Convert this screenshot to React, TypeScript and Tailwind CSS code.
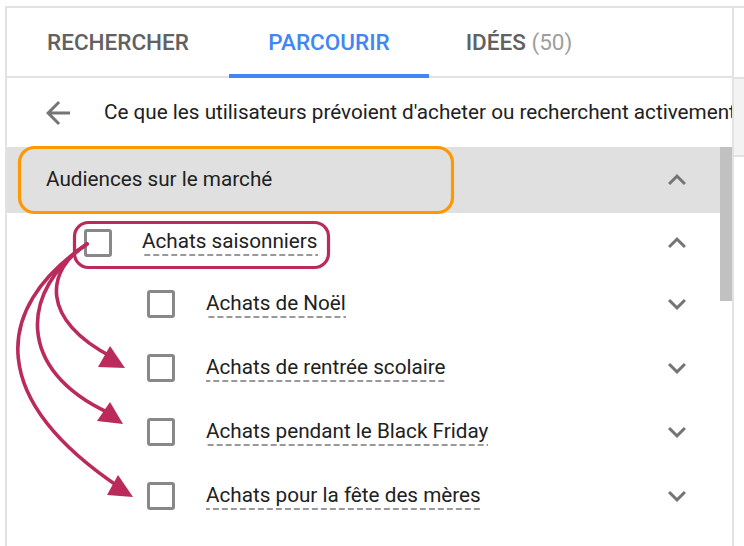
function Chevron({ up }: { up?: boolean }) {
  return (
    <svg viewBox="0 0 24 24" className="h-[36px] w-[36px] shrink-0 fill-[#757575]">
      {up ? (
        <path d="M12 8l-6 6 1.41 1.41L12 10.83l4.59 4.58L18 14z" />
      ) : (
        <path d="M16.59 8.59L12 13.17 7.41 8.59 6 10l6 6 6-6z" />
      )}
    </svg>
  );
}

function Checkbox() {
  return <span className="h-[28px] w-[28px] shrink-0 rounded-[3px] border-[3px] border-[#888888]" />;
}

function Label({ text }: { text: string }) {
  return (
    <span className="inline-block bg-[linear-gradient(to_right,#999999_62%,transparent_62%)] bg-[length:9px_2px] bg-bottom bg-repeat-x pb-[3px] text-[20.7px] leading-[24px] text-[#212121]">
      {text}
    </span>
  );
}

const items = [
  'Achats de Noël',
  'Achats de rentrée scolaire',
  'Achats pendant le Black Friday',
  'Achats pour la fête des mères',
];

export default function App() {
  return (
    <div className="relative h-[546px] w-[744px] overflow-hidden bg-white font-['Roboto',sans-serif]">
      <div className="flex h-full pl-[5px] pt-[6px]">
        <div className="flex w-[729px] flex-col border-x-2 border-t-2 border-[#e2e2e2]">
          {/* tabs */}
          <div className="flex h-[70px] border-b-2 border-[#e2e2e2] pt-[2px] text-[22.5px] font-medium">
            <div className="flex w-[222px] items-center justify-center text-[#616161]">RECHERCHER</div>
            <div className="relative flex w-[200px] items-center justify-center text-[#4285f4]">
              PARCOURIR
              <span className="absolute inset-x-0 bottom-[-2px] h-[4px] bg-[#4285f4]" />
            </div>
            <div className="flex w-[180px] items-center justify-center text-[#616161]">
              IDÉES&nbsp;<span className="font-normal text-[#9e9e9e]">(50)</span>
            </div>
          </div>

          {/* breadcrumb */}
          <div className="flex h-[69px] items-center gap-[28px] overflow-hidden whitespace-nowrap pl-[33px]">
            <svg viewBox="0 0 24 24" className="h-[36px] w-[36px] shrink-0 fill-[#757575]">
              <path d="M20 11H7.83l5.59-5.59L12 4l-8 8 8 8 1.41-1.41L7.83 13H20v-2z" />
            </svg>
            <span className="text-[20.7px] text-[#212121]">
              Ce que les utilisateurs prévoient d'acheter ou recherchent activement
            </span>
          </div>

          {/* list */}
          <div className="flex flex-1">
            <div className="flex-1">
              <div className="flex h-[66px] items-center justify-between bg-[#e0e0e0] pl-[39px] pr-[25px]">
                <span className="text-[20.7px] text-[#212121]">Audiences sur le marché</span>
                <Chevron up />
              </div>
              <div className="flex h-[59px] items-center justify-between pl-[77px] pr-[25px]">
                <div className="flex items-center gap-[30px]">
                  <Checkbox />
                  <Label text="Achats saisonniers" />
                </div>
                <Chevron up />
              </div>
              {items.map((t) => (
                <div key={t} className="flex h-[64px] items-center justify-between pl-[140px] pr-[25px]">
                  <div className="flex items-center gap-[31px]">
                    <Checkbox />
                    <Label text={t} />
                  </div>
                  <Chevron />
                </div>
              ))}
            </div>
            <div className="w-[12px]">
              <div className="h-[154px] bg-[#c1c1c1]" />
            </div>
          </div>
        </div>
        <div className="flex-1 border-t-2 border-[#e2e2e2]">
          <div className="mt-[69px] h-[80px] border-y-2 border-[#e2e2e2] bg-[#f3f3f3]" />
        </div>
      </div>

      {/* annotations */}
      <svg className="pointer-events-none absolute inset-0" width="744" height="546" viewBox="0 0 744 546">
        <rect x="19.5" y="147.5" width="433" height="65" rx="15" fill="none" stroke="#ff9800" strokeWidth="3.2" />
        <rect x="74.5" y="222.5" width="254" height="45" rx="14" fill="none" stroke="#ba2b5b" strokeWidth="3.2" />
        <g fill="none" stroke="#ba2b5b" strokeWidth="3.6" strokeLinecap="round">
          <path d="M87 244 C45 270 40 320 112 357" />
          <path d="M87 244 C20 290 15 370 109 413" />
          <path d="M87 244 C-10 310 -10 400 119 487" />
        </g>
        <g fill="#ba2b5b">
          <polygon points="125,368 98,367 110,346" />
          <polygon points="123,424 97,421 110,402" />
          <polygon points="133,497 107,495 118,475" />
        </g>
      </svg>
    </div>
  );
}
